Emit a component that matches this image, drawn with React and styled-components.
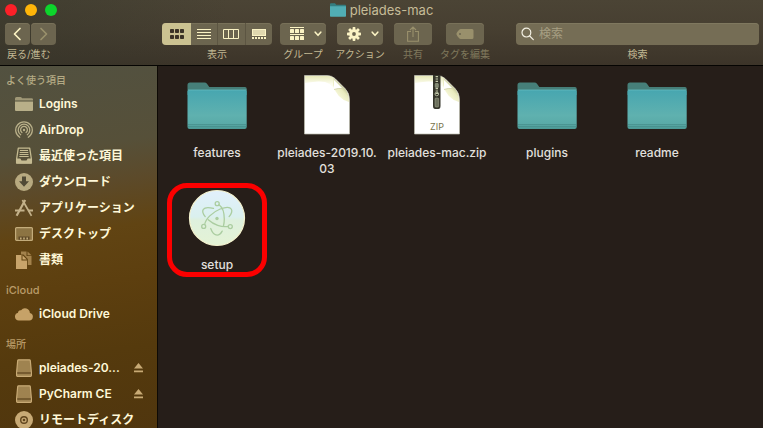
import React, { useState } from "react";
import styled, { createGlobalStyle } from "styled-components";

const GlobalStyle = createGlobalStyle`
  *, *::before, *::after { box-sizing: border-box; }
  body {
    margin: 0;
    background: #261e19;
    font-family: Inter, "Noto Sans CJK JP", sans-serif;
    -webkit-font-smoothing: antialiased;
  }
  button, input { font: inherit; color: inherit; margin: 0; border: 0; padding: 0; background: none; }
  a { color: inherit; text-decoration: none; }
  ul { list-style: none; margin: 0; padding: 0; }
  svg { display: block; flex: none; }
`;

const Window = styled.div`
  display: flex;
  flex-direction: column;
  height: 100vh;
  overflow: hidden;
`;

const Header = styled.header`
  flex: none;
  border-bottom: 1px solid #050402;
  background:
    linear-gradient(90deg, rgba(52, 54, 42, 0.5), rgba(62, 56, 44, 0) 30%),
    linear-gradient(180deg, #4b4435 0%, #473f31 45%, #3c3429 100%);
`;

const TitleBar = styled.div`
  display: grid;
  grid-template-columns: 1fr auto 1fr;
  align-items: center;
  height: 19px;
  padding: 0 5px;
`;

const Lights = styled.div`
  display: flex;
  gap: 8px;
`;

const Light = styled.button`
  width: 12px;
  height: 12px;
  border-radius: 50%;
  background: ${(p) => p.$color};
`;

const Title = styled.h1`
  display: flex;
  align-items: center;
  gap: 4px;
  margin: 0;
  font-size: 13px;
  line-height: 16px;
  font-weight: 400;
  color: #c6bc98;
`;

const Toolbar = styled.div`
  display: flex;
  gap: 8px;
  padding: 4px 4px 3px 5px;
`;

const Tool = styled.div`
  display: flex;
  flex-direction: column;
  align-items: center;
  flex: ${(p) => (p.$grow ? "1" : "none")};
  width: ${(p) => p.$width || "auto"};
  margin-left: ${(p) => (p.$grow ? "18px" : "0")};
`;

const NavTool = styled(Tool)`
  align-items: flex-start;
  width: 149px;
`;

const Caption = styled.span`
  margin-top: 1px;
  font-size: 10px;
  line-height: 16px;
  white-space: nowrap;
  color: ${(p) => (p.$dim ? "#7f785c" : "#c2b893")};
`;

const NavCaption = styled(Caption)`
  padding-left: 2px;
`;

const NavButtons = styled.div`
  display: flex;
  gap: 1px;
`;

const ToolButton = styled.button`
  display: flex;
  align-items: center;
  justify-content: center;
  width: ${(p) => p.$width};
  height: 22px;
  border-radius: 4px;
  background: #6c654f;
  box-shadow: inset 0 1px 0 #787159;
  color: ${(p) => (p.disabled ? "#99906c" : "#fbf3c4")};
`;

const MenuButton = styled(ToolButton)`
  justify-content: space-between;
  padding: 0 4px 0 10px;
`;

const Segments = styled.div`
  display: flex;
  width: 110px;
  height: 22px;
  border-radius: 4px;
  overflow: hidden;
  background: #6c654f;
  box-shadow: inset 0 1px 0 #787159;
`;

const Segment = styled.button`
  flex: 1;
  display: flex;
  align-items: center;
  justify-content: center;
  border-right: 1px solid #5c5542;
  background: ${(p) => (p["aria-pressed"] ? "#cbc291" : "transparent")};
  color: ${(p) => (p["aria-pressed"] ? "#3b3326" : "#fbf3c4")};
  &:first-child { flex: none; width: 29px; border-right: 0; }
  &:last-child { border-right: 0; }
`;

const SearchField = styled.div`
  display: flex;
  align-items: center;
  gap: 4px;
  width: 100%;
  height: 22px;
  padding: 0 5px;
  border-radius: 4px;
  background: #756d55;
  box-shadow: inset 0 1px 0 #7f785f;
  color: #f4f1e4;
`;

const SearchInput = styled.input`
  flex: 1;
  min-width: 0;
  font-size: 12px;
  line-height: 18px;
  outline: none;
  &::placeholder { color: #a79f83; opacity: 1; }
`;

const Body = styled.div`
  flex: 1;
  display: flex;
  min-height: 0;
`;

const Sidebar = styled.nav`
  flex: none;
  width: 158px;
  padding-top: 1px;
  overflow: hidden;
  border-right: 1px solid #0e0a05;
  background: linear-gradient(172deg, #525140 0%, #565039 24%, #5c4a2a 34%, #614413 46%, #5d3f0f 60%, #553a0d 78%, #50360e 100%);
`;

const Section = styled.section`
  & + & { margin-top: 4px; }
`;

const SectionTitle = styled.h2`
  margin: 0;
  padding: 5px 6px 3px;
  font-size: 10px;
  line-height: 16px;
  font-weight: 500;
  color: ${(p) => p.$color};
`;

const LatinSectionTitle = styled(SectionTitle)`
  font-size: 11px;
`;

const Place = styled.a`
  display: flex;
  align-items: center;
  gap: 6px;
  height: 26px;
  padding: 0 14px 0 15px;
  font-size: 12px;
  line-height: 18px;
  font-weight: 600;
  color: #fff8d8;
`;

const PlaceIcon = styled.span`
  display: flex;
  color: ${(p) => p.$color};
`;

const PlaceName = styled.span`
  flex: 1;
  min-width: 0;
  white-space: nowrap;
`;

const Files = styled.main`
  flex: 1;
  display: grid;
  grid-template-columns: repeat(auto-fill, 110px);
  grid-auto-rows: 102px;
  gap: 10px 0;
  padding: 9px 0 0 4px;
  background: #261e19;
`;

const FileItem = styled.button`
  position: relative;
  display: flex;
  flex-direction: column;
  align-items: center;
  gap: 10px;
`;

const FileArt = styled.span`
  display: flex;
  align-items: center;
  justify-content: center;
  height: 60px;
`;

const FileName = styled.span`
  max-width: 104px;
  font-size: 12px;
  line-height: 16px;
  font-weight: 500;
  text-align: center;
  word-break: break-all;
  color: #e2e0de;
`;

const Highlight = styled.span`
  position: absolute;
  inset: -4px 5px 12px;
  border: 5px solid #fb0000;
  border-radius: 20px;
  pointer-events: none;
`;

const Chevron = ({ left }) => (
  <svg width="9" height="14" viewBox="0 0 9 14" fill="none" stroke="currentColor" strokeWidth="1.7" strokeLinecap="round" strokeLinejoin="round">
    <path d={left ? "M7 1.5 1.5 7 7 12.5" : "M2 1.5 7.5 7 2 12.5"} />
  </svg>
);

const Caret = () => (
  <svg width="8" height="6" viewBox="0 0 8 6" fill="none" stroke="currentColor" strokeWidth="1.6" strokeLinecap="round" strokeLinejoin="round">
    <path d="M1.2 1.2 4 4.3 6.8 1.2" />
  </svg>
);

const GridIcon = () => (
  <svg width="14" height="10" viewBox="0 0 14 10" fill="currentColor">
    {[0, 5, 10].map((x) => [0, 6].map((y) => <rect key={`${x}-${y}`} x={x} y={y} width="4" height="4" rx="0.8" />))}
  </svg>
);

const ListIcon = () => (
  <svg width="14" height="10" viewBox="0 0 14 10" fill="currentColor">
    {[0, 3, 6, 9].map((y) => <rect key={y} y={y} width="14" height="1" />)}
  </svg>
);

const ColumnsIcon = () => (
  <svg width="16" height="10" viewBox="0 0 16 10" fill="none" stroke="currentColor">
    <path d="M.5.5h15v9H.5zM5.5.5v9M10.5.5v9" />
  </svg>
);

const GalleryIcon = () => (
  <svg width="14" height="10" viewBox="0 0 14 10" fill="currentColor">
    <rect x="0.5" y="0.5" width="13" height="6" fillOpacity="0.82" stroke="currentColor" />
    {[0, 3, 6, 9, 12].map((x) => <rect key={x} x={x} y="8" width="2" height="2" />)}
  </svg>
);

const GroupIcon = () => (
  <svg width="14" height="14" viewBox="0 0 14 14" fill="currentColor">
    <rect width="14" height="1" />
    {[0, 5, 10].map((x) => [2, 9].map((y) => <rect key={`${x}-${y}`} x={x} y={y} width="4" height="4" rx="0.6" />))}
    <rect y="7" width="14" height="1" />
  </svg>
);

const GearIcon = () => (
  <svg width="14" height="14" viewBox="-7 -7 14 14">
    {[0, 45, 90, 135].map((a) => <rect key={a} x="-1.4" y="-7" width="2.8" height="14" rx="0.7" fill="currentColor" transform={`rotate(${a})`} />)}
    <circle r="4.8" fill="currentColor" />
    <circle r="1.9" fill="#6c654f" />
  </svg>
);

const ShareIcon = () => (
  <svg width="12" height="16" viewBox="0 0 12 16" fill="none" stroke="currentColor" strokeWidth="1.1">
    <path d="M4 5.5H.6v9.8h10.8V5.5H8M6 11V1M3 4l3-3 3 3" />
  </svg>
);

const TagIcon = () => (
  <svg width="18" height="10" viewBox="0 0 18 10" fill="currentColor">
    <path fillRule="evenodd" d="M4.5 0H16a1.5 1.5 0 0 1 1.5 1.5v7A1.5 1.5 0 0 1 16 10H4.5C3.6 10 .4 6.3.4 5S3.6 0 4.5 0ZM4 4a1 1 0 1 0 0 2 1 1 0 0 0 0-2Z" />
  </svg>
);

const SearchIcon = () => (
  <svg width="14" height="14" viewBox="0 0 14 14" fill="none" stroke="currentColor" strokeWidth="1.2" strokeLinecap="round">
    <circle cx="5.4" cy="5.6" r="4.4" />
    <path d="m8.700 9 3.600 3.600" />
  </svg>
);

const FolderGlyph = () => (
  <svg width="18" height="18" viewBox="0 0 18 18" fill="currentColor">
    <path d="M0 5.500V3.500Q0 2 1.500 2h4q.8 0 1.300.7l.3.500H16.500q1.500 0 1.500 1.300v1Z" opacity=".75" />
    <path d="M0 6.500h18V15q0 1-1 1H1q-1 0-1-1Z" />
  </svg>
);

const AirDropGlyph = () => (
  <svg width="18" height="18" viewBox="0 0 18 18" fill="none" stroke="currentColor" strokeWidth="1.3" strokeLinecap="round">
    <path d="M4.700 16.200a8.300 8.300 0 1 1 8.600 0" />
    <path d="M5.700 13.700a5.800 5.800 0 1 1 6.600 0" />
    <path d="M6.900 11.500a3.400 3.400 0 1 1 4.200 0" />
    <circle cx="9" cy="9" r="1.200" fill="currentColor" stroke="none" />
  </svg>
);

const RecentsGlyph = () => (
  <svg width="18" height="18" viewBox="0 0 18 18">
    <path d="M3.300 1.200h11.400L16.400 12v4H1.600v-4Z" fill="none" stroke="currentColor" strokeWidth="1.3" strokeLinejoin="round" />
    <path d="M5 3.500h8M4.700 5.500h8.600M4.500 7.500h9M4.300 9.500h9.400" stroke="currentColor" strokeWidth="1.100" />
    <path d="M1.500 11.500h3.800l1.200 2h5l1.200-2h3.800v5h-15Z" fill="currentColor" />
  </svg>
);

const DownloadGlyph = () => (
  <svg width="18" height="18" viewBox="0 0 18 18">
    <circle cx="9" cy="9" r="9" fill="currentColor" />
    <path d="M7 3.500h4v4.700h3L9 13.800 4 8.200h3Z" fill="#514a35" />
  </svg>
);

const AppsGlyph = () => (
  <svg width="18" height="18" viewBox="0 0 18 18" fill="none" stroke="currentColor">
    <path d="M10.200 1 3.400 13.500 1.600 16.800" strokeWidth="2.200" />
    <path d="m7.400 1 7.200 12.500 1.900 3.300" strokeWidth="1.700" />
    <path d="M0 11.500h9.500M13.200 11.500H18" strokeWidth="1.800" />
  </svg>
);

const DesktopGlyph = () => (
  <svg width="18" height="18" viewBox="0 0 18 18">
    <rect x="0.6" y="2.600" width="16.800" height="12.800" rx="1" fill="currentColor" fillOpacity=".45" stroke="currentColor" strokeWidth="1.200" />
    <path d="M3.500 14.800v-3.300h11v3.300Z" fill="#5f4a28" />
    <path d="M5 13.500h1.600M8.200 13.500h1.600M11.400 13.500H13" stroke="currentColor" strokeWidth="2" />
  </svg>
);

const DocumentsGlyph = () => (
  <svg width="18" height="18" viewBox="0 0 18 18" fill="currentColor">
    <path d="M6 .5h5.500V5H16.500v9H12.800V8L8.500 3.500H6ZM12.500.5l4 3.700h-4Z" opacity=".65" />
    <path d="M1 4h5.500v5.500H12V18H1Z" />
    <path d="m7.500 4.200 4.300 4.300H7.500Z" />
  </svg>
);

const CloudGlyph = () => (
  <svg width="18" height="18" viewBox="0 0 18 18" fill="currentColor">
    <path d="M3.800 15.500a3.900 3.900 0 0 1-.8-7.700A2.800 2.800 0 0 1 6.100 5.200 4.900 4.900 0 0 1 14.900 8 3.800 3.800 0 0 1 14.300 15.500Z" />
  </svg>
);

const DriveGlyph = () => (
  <svg width="18" height="18" viewBox="0 0 18 18" stroke="currentColor">
    <path d="M3.600.8h10.800q.8 0 .9.800L16.400 13.500v3q0 .8-.8.8H2.400q-.8 0-.8-.8v-3L2.700 1.600q.1-.8.900-.8Z" fill="currentColor" fillOpacity=".65" strokeWidth="1.200" />
    <path d="M2.200 14h13.600" stroke="#5b411c" strokeWidth="1.200" />
  </svg>
);

const DiscGlyph = () => (
  <svg width="18" height="18" viewBox="0 0 18 18" fill="none">
    <circle cx="9" cy="9" r="9" fill="currentColor" />
    <circle cx="9" cy="9" r="3.300" stroke="#60451d" strokeWidth="1.400" />
    <circle cx="9" cy="9" r="1.300" fill="#60451d" />
  </svg>
);

const EjectGlyph = () => (
  <svg width="9" height="10" viewBox="0 0 9 10" fill="currentColor">
    <path d="M4.500 0 9 5.500H0ZM0 7.500h9v1.800H0Z" />
  </svg>
);

const MiniFolder = () => (
  <svg width="16" height="14" viewBox="0 0 16 14">
    <path d="M0 1.200Q0 .2 1 .2h4l1.200 1.500H15q1 0 1 1V5H0Z" fill="#347e80" />
    <path d="M0 3.200h16V13q0 .8-.8.8H.8Q0 13.800 0 13Z" fill="#51aeb4" />
  </svg>
);

const FolderArt = () => (
  <svg width="60" height="60" viewBox="0 0 60 60">
    <defs>
      <linearGradient id="folderFront" x1="0" y1="0" x2="0" y2="1">
        <stop offset="0" stopColor="#47a6b0" />
        <stop offset=".65" stopColor="#5fb1af" />
        <stop offset=".86" stopColor="#5aaba8" />
        <stop offset="1" stopColor="#4b9894" />
      </linearGradient>
    </defs>
    <path d="M.5 10Q.5 7.500 3 7.500h14.500q1.500 0 2.500 1.300l2.300 3.200H58q1.700 0 1.700 1.800V20H.5Z" fill="#467f79" />
    <path d="M.5 16.500Q.5 15 2 15h56.200q1.500 0 1.500 1.500V52q0 2-2 2H2.500q-2 0-2-2Z" fill="url(#folderFront)" />
    <path d="M1 15h58.500" stroke="#65bcc0" strokeWidth=".8" />
    <path d="M1 49.500h58.500M1 51.500h58.500" stroke="#438a86" strokeWidth=".6" />
  </svg>
);

const DocumentArt = ({ zip }) => (
  <svg width="46" height="60" viewBox="0 0 46 60">
    <defs>
      <linearGradient id="curlShade" gradientUnits="userSpaceOnUse" x1="29" y1="22" x2="40" y2="12">
        <stop offset="0" stopColor="#ffffff" />
        <stop offset=".3" stopColor="#f6f7d8" />
        <stop offset=".75" stopColor="#e9ebbf" />
        <stop offset="1" stopColor="#c2c497" />
      </linearGradient>
      <linearGradient id="topShade" gradientUnits="userSpaceOnUse" x1="0" y1="0" x2="0" y2="9">
        <stop offset="0" stopColor="#e4e6b2" />
        <stop offset="1" stopColor="#fdfdf0" />
      </linearGradient>
    </defs>
    <path d="M.5.5H23Q28 .5 31.500 4L41 13.500q4.500 4.500 4.500 11V59H.5Z" fill="#fff" stroke="#bebeaf" strokeWidth=".7" />
    <path d="M1 1h22q5 0 8 3v12Q28 6 14 6.500 6 7 1 8Z" fill="url(#topShade)" />
    <path d="M29.500 3 41 13.800q4 4.500 4 13.200Q33 24 29 10Z" fill="url(#curlShade)" />
    <path d="M30 5v9.500q4-1.500 8.500-1Z" fill="#fff" />
    <path d="M30 14.500q4-1.500 8.500-1" fill="none" stroke="#cfd1a5" strokeWidth=".8" />
    {zip && (
      <>
        <path d="M19 0h7.500v31q0 3-2.200 3h-3.100Q19 34 19 31Z" fill="#35352b" />
        <path d="M22.800 1v18" stroke="#c5c9aa" strokeWidth="2.400" strokeDasharray="1.200 1.200" />
        <rect x="20.800" y="8" width="4" height="5" rx="1.500" fill="#828873" />
        <circle cx="22.800" cy="19" r="1.800" fill="none" stroke="#aeb59a" />
        <rect x="21" y="23" width="3.600" height="9" rx="1" fill="#6c705d" stroke="#a7ad91" strokeWidth=".5" />
        <text x="23" y="55" textAnchor="middle" fontFamily="Inter" fontSize="9" fill="#78714b">ZIP</text>
      </>
    )}
  </svg>
);

const ElectronArt = () => (
  <svg width="58" height="60" viewBox="0 -2 58 60">
    <defs>
      <linearGradient id="discFill" x1="0" y1="0" x2="0" y2="1">
        <stop offset="0" stopColor="#e1f0fc" />
        <stop offset=".48" stopColor="#daf0ee" />
        <stop offset=".54" stopColor="#def0dd" />
        <stop offset="1" stopColor="#e4f3d5" />
      </linearGradient>
    </defs>
    <circle cx="29" cy="29" r="27.500" fill="url(#discFill)" stroke="#f5f3cf" strokeWidth="1.200" />
    <g fill="none" stroke="#abcda0" strokeWidth="1.300" strokeLinecap="round">
      <path d="M25.500 19.400c-4.900-1.200-8.900-.9-10.200 1-1.200 1.900-.4 4.500 1.900 7.200" />
      <path d="M20.200 30.800c5.200 4.700 13.500 7.900 20.200 6.500" />
      <path d="M16.700 35.500c.8-5.500 7.500-12.300 15.500-15.500 5.500-2.100 10-1.900 11.200.2 1 1.800.1 4.500-2.300 7.400" />
      <path d="M22.700 39.500c1.600 4.300 4 6.600 6.400 6.600 1.900 0 3.700-1.400 5.100-4" />
      <path d="M31 15.800c3.200 2.300 5.300 8 5.300 14.300 0 2.400-.3 4.700-.8 6.700" />
      <circle cx="29.200" cy="14.700" r="2" />
      <circle cx="15.700" cy="37.400" r="2" />
      <circle cx="42.300" cy="37.600" r="2" />
    </g>
    <circle cx="29" cy="29.500" r="1.700" fill="#abcda0" />
  </svg>
);

const views = [
  { name: "アイコン", Icon: GridIcon },
  { name: "リスト", Icon: ListIcon },
  { name: "カラム", Icon: ColumnsIcon },
  { name: "ギャラリー", Icon: GalleryIcon },
];

const sections = [
  {
    title: "よく使う項目",
    Heading: SectionTitle,
    color: "#b3aa84",
    places: [
      { name: "Logins", Icon: FolderGlyph, color: "#b8af89" },
      { name: "AirDrop", Icon: AirDropGlyph, color: "#b8af89" },
      { name: "最近使った項目", Icon: RecentsGlyph, color: "#c5bb91" },
      { name: "ダウンロード", Icon: DownloadGlyph, color: "#b8aa80" },
      { name: "アプリケーション", Icon: AppsGlyph, color: "#c3b18a" },
      { name: "デスクトップ", Icon: DesktopGlyph, color: "#c3ac7b" },
      { name: "書類", Icon: DocumentsGlyph, color: "#c8a46b" },
    ],
  },
  {
    title: "iCloud",
    Heading: LatinSectionTitle,
    color: "#b99b69",
    places: [{ name: "iCloud Drive", Icon: CloudGlyph, color: "#c6a268" }],
  },
  {
    title: "場所",
    Heading: SectionTitle,
    color: "#b99b69",
    places: [
      { name: "pleiades-20...", Icon: DriveGlyph, color: "#c8aa75", eject: true },
      { name: "PyCharm CE", Icon: DriveGlyph, color: "#c8aa75", eject: true },
      { name: "リモートディスク", Icon: DiscGlyph, color: "#c8aa75" },
    ],
  },
];

const files = [
  { name: "features", art: <FolderArt /> },
  { name: "pleiades-2019.10.03", art: <DocumentArt /> },
  { name: "pleiades-mac.zip", art: <DocumentArt zip /> },
  { name: "plugins", art: <FolderArt /> },
  { name: "readme", art: <FolderArt /> },
  { name: "setup", art: <ElectronArt />, highlighted: true },
];

export default function App() {
  const [view, setView] = useState(0);
  return (
    <>
      <GlobalStyle />
      <Window>
        <Header>
          <TitleBar>
            <Lights>
              <Light $color="#fc2028" aria-label="閉じる" />
              <Light $color="#feb509" aria-label="しまう" />
              <Light $color="#0dd52c" aria-label="フルスクリーン" />
            </Lights>
            <Title><MiniFolder />pleiades-mac</Title>
          </TitleBar>
          <Toolbar>
            <NavTool>
              <NavButtons>
                <ToolButton $width="25px" aria-label="戻る"><Chevron left /></ToolButton>
                <ToolButton $width="25px" aria-label="進む" disabled><Chevron /></ToolButton>
              </NavButtons>
              <NavCaption>戻る/進む</NavCaption>
            </NavTool>
            <Tool>
              <Segments role="group" aria-labelledby="view-caption">
                {views.map(({ name, Icon }, i) => (
                  <Segment key={name} aria-label={name} aria-pressed={view === i} onClick={() => setView(i)}>
                    <Icon />
                  </Segment>
                ))}
              </Segments>
              <Caption id="view-caption">表示</Caption>
            </Tool>
            <Tool $width="46px">
              <MenuButton $width="46px" aria-labelledby="group-caption"><GroupIcon /><Caret /></MenuButton>
              <Caption id="group-caption">グループ</Caption>
            </Tool>
            <Tool $width="52px">
              <MenuButton $width="46px" aria-labelledby="action-caption"><GearIcon /><Caret /></MenuButton>
              <Caption id="action-caption">アクション</Caption>
            </Tool>
            <Tool $width="38px">
              <ToolButton $width="38px" aria-labelledby="share-caption" disabled><ShareIcon /></ToolButton>
              <Caption id="share-caption" $dim>共有</Caption>
            </Tool>
            <Tool $width="50px">
              <ToolButton $width="38px" aria-labelledby="tag-caption" disabled><TagIcon /></ToolButton>
              <Caption id="tag-caption" $dim>タグを編集</Caption>
            </Tool>
            <Tool $grow>
              <SearchField>
                <SearchIcon />
                <SearchInput id="search" type="search" placeholder="検索" />
              </SearchField>
              <Caption as="label" htmlFor="search">検索</Caption>
            </Tool>
          </Toolbar>
        </Header>
        <Body>
          <Sidebar>
            {sections.map(({ title, Heading, color, places }) => (
              <Section key={title}>
                <Heading $color={color}>{title}</Heading>
                <ul>
                  {places.map(({ name, Icon, color: iconColor, eject }) => (
                    <li key={name}>
                      <Place href="#">
                        <PlaceIcon $color={iconColor}><Icon /></PlaceIcon>
                        <PlaceName>{name}</PlaceName>
                        {eject && <PlaceIcon $color="#c8aa75"><EjectGlyph /></PlaceIcon>}
                      </Place>
                    </li>
                  ))}
                </ul>
              </Section>
            ))}
          </Sidebar>
          <Files>
            {files.map(({ name, art, highlighted }) => (
              <FileItem key={name}>
                <FileArt>{art}</FileArt>
                <FileName>{name}</FileName>
                {highlighted && <Highlight />}
              </FileItem>
            ))}
          </Files>
        </Body>
      </Window>
    </>
  );
}
